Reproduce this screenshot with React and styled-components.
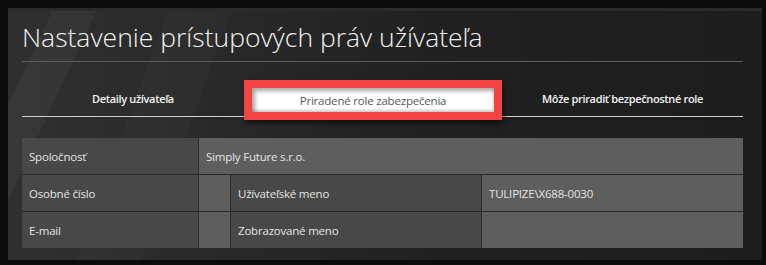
import React from "react";
import styled, { createGlobalStyle } from "styled-components";

const GlobalStyle = createGlobalStyle`
  html, body {
    margin: 0;
    padding: 0;
    background: #0b0b0b;
  }
  body {
    font-family: "Open Sans", "Noto Sans", sans-serif;
  }
`;

const Page = styled.div`
  width: 766px;
  height: 265px;
  padding: 8px 4px 5px 8px;
  box-sizing: border-box;
`;

const Panel = styled.div`
  height: 252px;
  box-sizing: border-box;
  padding: 10px 19px 0 14px;
  border-top: 3px solid #2b2b2b;
  background:
    linear-gradient(115deg, transparent 0px, transparent 40px, rgba(255,255,255,0.035) 40px, rgba(255,255,255,0.035) 80px, transparent 80px),
    linear-gradient(110deg, transparent 150px, rgba(255,255,255,0.02) 150px, rgba(255,255,255,0.02) 210px, transparent 210px),
    linear-gradient(90deg, #303030 0%, #282828 30%, #202020 60%, #1d1d1d 100%);
`;

const Title = styled.h1`
  margin: 0;
  padding: 0 0 7px 0;
  height: 33px;
  font-family: "Open Sans", sans-serif;
  font-weight: 300;
  font-size: 26.5px;
  line-height: 33px;
  color: #f2f2f2;
  border-bottom: 1px solid #5c5c5c;
  white-space: nowrap;
`;

const TabRow = styled.div`
  display: grid;
  grid-template-columns: 222px 258px 1fr;
  align-items: center;
  height: 36px;
  margin-top: 18px;
  border-bottom: 1px solid #cfcfcf;
`;

const Tab = styled.div`
  text-align: center;
  font-family: "Open Sans", sans-serif;
  font-size: 11px;
  font-weight: 600;
  color: #f4f4f4;
  white-space: nowrap;
  letter-spacing: -0.35px;
`;

const ActiveTab = styled.div`
  align-self: start;
  height: 40px;
  margin-bottom: -4px;
  box-sizing: border-box;
  border: 8px solid #f44343;
  box-shadow: 2px 3px 5px rgba(0, 0, 0, 0.6);
  display: flex;
  position: relative;
  z-index: 1;
`;

const ActiveInner = styled.div`
  flex: 1;
  display: flex;
  align-items: center;
  justify-content: center;
  background: #ffffff;
  box-shadow: inset 3px 3px 4px rgba(0, 0, 0, 0.35), inset -1px -2px 3px rgba(0, 0, 0, 0.2);
  font-family: "Open Sans", sans-serif;
  font-size: 11.5px;
  color: #575757;
  letter-spacing: -0.2px;
  white-space: nowrap;
`;

const Grid = styled.div`
  display: grid;
  grid-template-columns: 176px 31px 250px 1fr;
  grid-auto-rows: 36px;
  gap: 1px;
  margin-top: 21px;
  background: #2a2a2a;
`;

const Cell = styled.div`
  grid-column: ${(p) => p.$span || "auto"};
  display: flex;
  align-items: center;
  padding-left: 7px;
  background: ${(p) => (p.$value ? "#5e5e5e" : "#484848")};
  font-family: "Open Sans", sans-serif;
  font-size: 11.5px;
  letter-spacing: -0.2px;
  color: #e4e4e4;
  white-space: nowrap;
`;

export default function App() {
  return (
    <Page>
      <GlobalStyle />
      <Panel>
        <Title>Nastavenie prístupových práv užívateľa</Title>
        <TabRow>
          <Tab>Detaily užívateľa</Tab>
          <ActiveTab>
            <ActiveInner>Priradené role zabezpečenia</ActiveInner>
          </ActiveTab>
          <Tab>Môže priradiť bezpečnostné role</Tab>
        </TabRow>
        <Grid>
          <Cell>Spoločnosť</Cell>
          <Cell $value $span="span 3">Simply Future s.r.o.</Cell>
          <Cell>Osobné číslo</Cell>
          <Cell $value />
          <Cell>Užívateľské meno</Cell>
          <Cell $value>TULIPIZE\X688-0030</Cell>
          <Cell>E-mail</Cell>
          <Cell $value />
          <Cell>Zobrazované meno</Cell>
          <Cell $value />
        </Grid>
      </Panel>
    </Page>
  );
}
